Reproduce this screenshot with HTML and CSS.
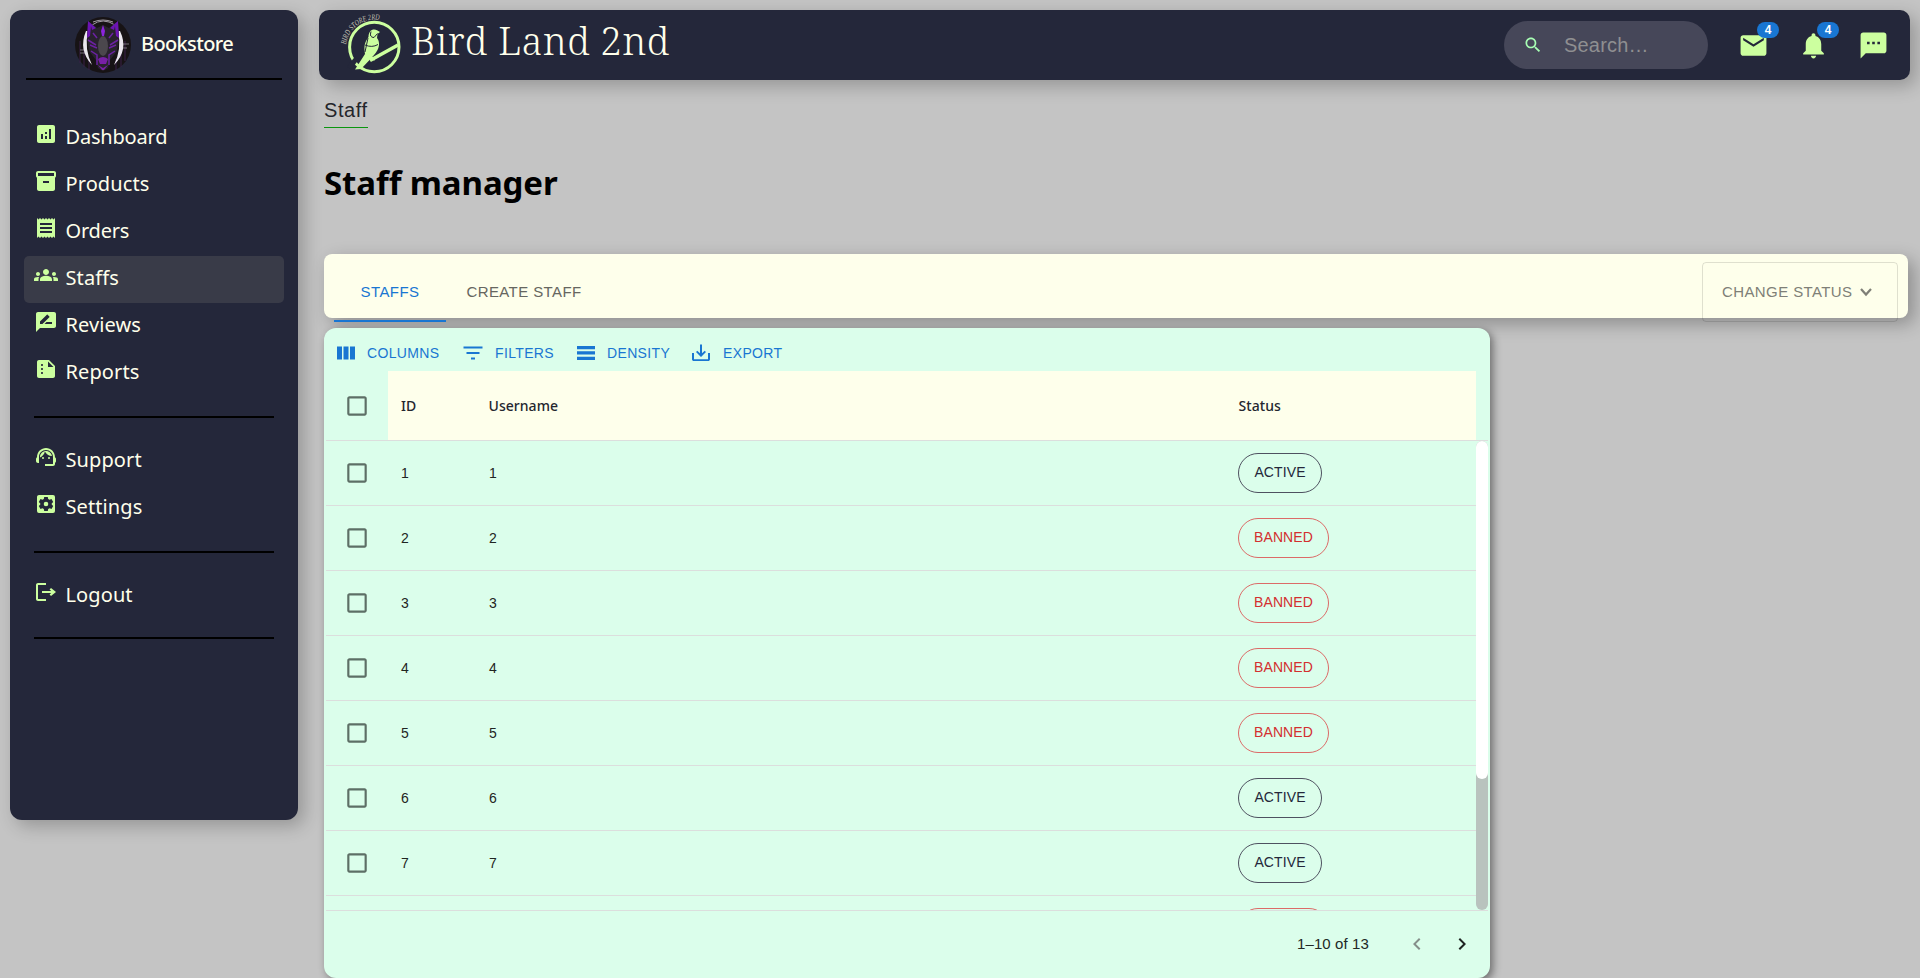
FILE: index.html
```html
<!DOCTYPE html>
<html lang="en">
<head>
<meta charset="utf-8">
<title>Staff manager</title>
<link rel="stylesheet" href="styles.css">
</head>
<body>
<svg class="defs" width="0" height="0">
  <symbol id="box" viewBox="0 0 24 24"><path d="M19 5v14H5V5h14m0-2H5c-1.100 0-2 .9-2 2v14c0 1.100.9 2 2 2h14c1.100 0 2-.9 2-2V5c0-1.100-.9-2-2-2z"/></symbol>
</svg>
<div class="layout">
  <aside class="sidebar">
    <div class="brand">
      <svg class="avatar" viewBox="0 0 56 56">
        <circle cx="28" cy="28" r="28" fill="#171315"/>
        <path d="M5 24v22M9 30v20M50 24v20M46 30v20M14 42v11M41 42v11" stroke="#3a2049" stroke-width="1"/>
        <path d="M5 33h6M5 36h5M46 27h8M46 31h6" stroke="#77707a" stroke-width="1"/>
        <path d="M17 8Q28 0 40 8M18 5Q28 1 38 5" fill="none" stroke="#a19ba3" stroke-width="1"/>
        <path d="M11 14Q3 33 17 48Q9 32 13 14zM45 14Q54 33 39 48Q47 32 43 14z" fill="#eae6ee"/>
        <path d="M12 21L13 4l9 7 6-3 6 3 9-7 1 17-2 13-7 9-2 8-5 3-5-3-2-8-7-9z" fill="#28222d"/>
        <path d="M12 21L13 4l8 7-4 2-1-4-1 10zM44 21L43 4l-8 7 4 2 1-4 1 10z" fill="#6c14b3"/>
        <path d="M28 8l2 6-1 5h-2l-1-5z" fill="#8c24dc"/>
        <path d="M13 23l8 5M43 23l-8 5M15 28l7 3M41 28l-7 3M16 34l6 4v10M40 34l-6 4v10M18 16l4 5M38 16l-4 5" fill="none" stroke="#6b21a2" stroke-width="1.500"/>
        <ellipse cx="28" cy="29" rx="5" ry="10" fill="#4b474d"/>
        <path d="M23 42q5-4 10 0l-2 5h-6zM23 48l5 3 5-3-4 5h-2z" fill="#7820a6"/>
      </svg>
      <span class="brand-name">Bookstore</span>
    </div>
    <nav class="menu">
      <a class="item"><svg viewBox="0 0 24 24"><path d="M19 3H5c-1.100 0-2 .9-2 2v14c0 1.100.9 2 2 2h14c1.100 0 2-.9 2-2V5c0-1.100-.9-2-2-2zM9 17H7v-5h2v5zm4 0h-2v-3h2v3zm0-5h-2v-2h2v2zm4 5h-2V7h2v10z"/></svg><span class="narrow">Dashboard</span></a>
      <a class="item"><svg viewBox="0 0 24 24"><path d="M20 2H4c-1 0-2 .9-2 2v3.010c0 .72.43 1.340 1 1.690V20c0 1.100 1.100 2 2 2h14c.9 0 2-.9 2-2V8.700c.57-.35 1-.97 1-1.690V4c0-1.100-1-2-2-2zm-5 12H9v-2h6v2zm5-7H4V4h16v3z"/></svg><span>Products</span></a>
      <a class="item"><svg viewBox="0 0 24 24"><path d="M18 17H6v-2h12v2zm0-4H6v-2h12v2zm0-4H6V7h12v2zM3 22l1.500-1.500L6 22l1.500-1.500L9 22l1.500-1.500L12 22l1.500-1.500L15 22l1.500-1.500L18 22l1.500-1.500L21 22V2l-1.500 1.500L18 2l-1.500 1.500L15 2l-1.500 1.500L12 2l-1.500 1.500L9 2 7.500 3.500 6 2 4.500 3.500 3 2v20z"/></svg><span class="narrow">Orders</span></a>
      <a class="item active"><svg viewBox="0 0 24 24"><path d="M12 12.750c1.630 0 3.070.39 4.240.9 1.080.48 1.760 1.560 1.760 2.730V18H6v-1.610c0-1.180.68-2.260 1.760-2.730 1.170-.52 2.610-.91 4.240-.91zM4 13c1.100 0 2-.9 2-2s-.9-2-2-2-2 .9-2 2 .9 2 2 2zm1.130 1.100c-.37-.06-.74-.1-1.130-.1-.99 0-1.930.21-2.780.58C.48 14.900 0 15.620 0 16.430V18h4.500v-1.610c0-.83.23-1.610.63-2.290zM20 13c1.100 0 2-.9 2-2s-.9-2-2-2-2 .9-2 2 .9 2 2 2zm4 3.430c0-.81-.48-1.530-1.220-1.850-.85-.37-1.790-.58-2.780-.58-.39 0-.76.04-1.130.1.4.68.63 1.460.63 2.290V18H24v-1.570zM12 6c1.660 0 3 1.340 3 3s-1.340 3-3 3-3-1.340-3-3 1.340-3 3-3z"/></svg><span>Staffs</span></a>
      <a class="item"><svg viewBox="0 0 24 24"><path d="M20 2H4c-1.100 0-1.990.9-1.990 2L2 22l4-4h14c1.100 0 2-.9 2-2V4c0-1.100-.9-2-2-2zM6 14v-2.470l6.880-6.880c.2-.2.51-.2.71 0l1.770 1.770c.2.2.2.510 0 .71L8.470 14H6zm12 0h-7.500l2-2H18v2z"/></svg><span>Reviews</span></a>
      <a class="item"><svg viewBox="0 0 24 24"><path d="M15 3H5c-1.100 0-1.990.9-1.990 2L3 19c0 1.100.89 2 1.990 2H19c1.100 0 2-.9 2-2V9l-6-6zM8 17c-.55 0-1-.45-1-1s.45-1 1-1 1 .45 1 1-.45 1-1 1zm0-4c-.55 0-1-.45-1-1s.45-1 1-1 1 .45 1 1-.45 1-1 1zm0-4c-.55 0-1-.45-1-1s.45-1 1-1 1 .45 1 1-.45 1-1 1zm6 1V4.500l5.500 5.500H14z"/></svg><span>Reports</span></a>
      <hr>
      <a class="item"><svg viewBox="0 0 24 24"><path d="M21 12.220C21 6.730 16.740 3 12 3c-4.690 0-9 3.650-9 9.280-.6.340-1 .98-1 1.720v2c0 1.100.9 2 2 2h1v-6.100c0-3.870 3.130-7 7-7s7 3.130 7 7V19h-8v2h8c1.100 0 2-.9 2-2v-1.220c.59-.31 1-.92 1-1.640v-2.300c0-.7-.41-1.310-1-1.620z"/><circle cx="9" cy="13" r="1"/><circle cx="15" cy="13" r="1"/><path d="M18 11.030C17.520 8.180 15.040 6 12.050 6c-3.030 0-6.290 2.510-6.030 6.450 2.470-1.010 4.330-3.210 4.860-5.890 1.310 2.630 4 4.440 7.120 4.470z"/></svg><span>Support</span></a>
      <a class="item"><svg viewBox="0 0 24 24"><path fill-rule="evenodd" d="M5 3h14a2 2 0 0 1 2 2v14a2 2 0 0 1-2 2H5a2 2 0 0 1-2-2V5c0-1.100.9-2 2-2zM10.200 5l-.4 2-1.300.8-2-.7-1.700 3 1.500 1.400v1l-1.500 1.400 1.700 3 2-.7 1.300.8.4 2h3.600l.4-2 1.300-.8 2 .7 1.700-3-1.500-1.400v-1l1.500-1.400-1.700-3-2 .7-1.300-.8-.4-2zM12 9.700a2.300 2.300 0 1 1 0 4.600 2.300 2.300 0 0 1 0-4.600z"/></svg><span>Settings</span></a>
      <hr>
      <a class="item logout"><svg viewBox="0 0 24 24"><path d="M17 8l-1.410 1.410L17.170 11H8v2h9.170l-1.580 1.580L17 16l5-4-5-4zM4 5h8V3H4c-1.100 0-2 .9-2 2v14c0 1.100.9 2 2 2h8v-2H4V5z"/></svg><span>Logout</span></a>
      <hr class="last">
    </nav>
  </aside>
  <div class="page">
    <header class="topbar">
      <svg class="logo" viewBox="0 0 70 70">
        <defs><path id="arc" d="M11 36.500A29 29 0 0 1 46.500 12.500"/></defs>
        <circle cx="39.300" cy="39" r="24.700" fill="none" stroke="#ccff9f" stroke-width="3"/>
        <path d="M35 52.500L63 37" stroke="#ccff9f" stroke-width="3.600"/>
        <path d="M14 60l8-10" stroke="#24273a" stroke-width="5"/>
        <path d="M20 61.500L30 46c-1-7-1-11 3.500-17 0-7 5-9 9-6.500l2.500 1.500-2.500 2-.5 4c2.500 3 2.800 8 .5 12-2 4-5 6-7 9L26 61z" fill="#ccff9f"/>
        <path d="M30 37q7 3 13-.5M36 23.500q-2 6 3 6l3.500-4M33 30l-3 14" fill="none" stroke="#24273a" stroke-width="1"/>
        <path d="M35 50l5 1" stroke="#ccff9f" stroke-width="3"/>
        <text class="arc-text"><textPath href="#arc" textLength="46" lengthAdjust="spacingAndGlyphs">BIRD STORE 2RD</textPath></text>
      </svg>
      <span class="site-name">Bird Land 2nd</span>
      <div class="search">
        <svg viewBox="0 0 24 24"><path d="M15.500 14h-.79l-.28-.27C15.410 12.590 16 11.110 16 9.500 16 5.910 13.090 3 9.500 3S3 5.910 3 9.500 5.910 16 9.500 16c1.610 0 3.090-.59 4.230-1.570l.27.28v.79l5 4.990L20.490 19l-4.990-5zm-6 0C7.010 14 5 11.990 5 9.500S7.010 5 9.500 5 14 7.010 14 9.500 11.990 14 9.500 14z"/></svg>
        <span>Search…</span>
      </div>
      <div class="actions">
        <div class="action"><svg viewBox="0 0 24 24"><path d="M20 4H4c-1.100 0-1.990.9-1.990 2L2 18c0 1.100.9 2 2 2h16c1.100 0 2-.9 2-2V6c0-1.100-.9-2-2-2zm0 4l-8 5-8-5V6l8 5 8-5v2z"/></svg><b class="badge">4</b></div>
        <div class="action"><svg viewBox="0 0 24 24"><path d="M12 22c1.100 0 2-.9 2-2h-4c0 1.100.89 2 2 2zm6-6v-5c0-3.070-1.640-5.640-4.500-6.320V4c0-.83-.67-1.500-1.500-1.500s-1.500.67-1.500 1.500v.68C7.630 5.360 6 7.920 6 11v5l-2 2v1h16v-1l-2-2z"/></svg><b class="badge">4</b></div>
        <div class="action"><svg viewBox="0 0 24 24"><path d="M20 2H4c-1.100 0-1.990.9-1.990 2L2 22l4-4h14c1.100 0 2-.9 2-2V4c0-1.100-.9-2-2-2zM9 11H7V9h2v2zm4 0h-2V9h2v2zm4 0h-2V9h2v2z"/></svg></div>
      </div>
    </header>
    <main class="content">
      <div class="crumb">Staff</div>
      <h1>Staff manager</h1>
      <div class="tabs">
        <div class="tab selected">STAFFS</div>
        <div class="tab">CREATE STAFF</div>
        <div class="change">CHANGE STATUS <svg viewBox="0 0 14 10"><path d="M2 2l5 5.500L12 2" fill="none" stroke="#7f7f77" stroke-width="2.200"/></svg></div>
      </div>
      <section class="grid">
        <div class="tools">
          <span class="tool t1"><svg viewBox="0 0 20 20"><path d="M1 3.500h5v13H1zM7.500 3.500h5v13h-5zM14 3.500h5v13h-5z"/></svg>COLUMNS</span>
          <span class="tool t2"><svg viewBox="0 0 20 20"><path d="M.5 3.500h19v2H.5zM3.500 9h13v2h-13zM8 14.500h4v2H8z"/></svg>FILTERS</span>
          <span class="tool t3"><svg viewBox="0 0 20 20"><path d="M1 3h18v3.200H1zM1 8.300h18v3.200H1zM1 13.800h18V17H1z"/></svg>DENSITY</span>
          <span class="tool t4"><svg viewBox="0 0 20 20"><path d="M17 10v6.200H3V10H1v6.200c0 1 .8 1.900 1.900 1.900h14.200c1 0 1.900-.8 1.900-1.900V10zM11 10.300l2.700-2.600 1.300 1.200-5 5-5-5 1.300-1.200L9 10.300V1.500h2z"/></svg>EXPORT</span>
        </div>
        <div class="head">
          <svg class="check"><use href="#box"/></svg>
          <div class="headcells"><span>ID</span><span>Username</span><span>Status</span></div>
        </div>
        <div class="body">
          <div class="rows">
            <div class="row"><svg class="check"><use href="#box"/></svg><span>1</span><span>1</span><i class="pill">ACTIVE</i></div>
            <div class="row"><svg class="check"><use href="#box"/></svg><span>2</span><span>2</span><i class="pill banned">BANNED</i></div>
            <div class="row"><svg class="check"><use href="#box"/></svg><span>3</span><span>3</span><i class="pill banned">BANNED</i></div>
            <div class="row"><svg class="check"><use href="#box"/></svg><span>4</span><span>4</span><i class="pill banned">BANNED</i></div>
            <div class="row"><svg class="check"><use href="#box"/></svg><span>5</span><span>5</span><i class="pill banned">BANNED</i></div>
            <div class="row"><svg class="check"><use href="#box"/></svg><span>6</span><span>6</span><i class="pill">ACTIVE</i></div>
            <div class="row"><svg class="check"><use href="#box"/></svg><span>7</span><span>7</span><i class="pill">ACTIVE</i></div>
            <div class="row"><svg class="check"></svg><span></span><span></span><i class="pill banned"></i></div>
          </div>
          <div class="track"><div class="thumb"></div></div>
        </div>
        <footer class="foot">
          <span>1–10 of 13</span>
          <svg class="prev" viewBox="0 0 24 24"><path d="M15.410 7.410L14 6l-6 6 6 6 1.410-1.410L10.830 12z"/></svg>
          <svg class="next" viewBox="0 0 24 24"><path d="M10 6L8.590 7.410 13.170 12l-4.580 4.590L10 18l6-6z"/></svg>
        </footer>
      </section>
    </main>
  </div>
</div>
</body>
</html>
```
FILE: styles.css
```css
* { box-sizing: border-box; }
body {
  margin: 0;
  background: #c4c4c4;
  font-family: "Liberation Sans", Arial, sans-serif;
  height: 978px;
  overflow: hidden;
}
svg { display: block; flex: none; }
.defs { position: absolute; }
.layout { display: flex; gap: 21px; padding: 10px; align-items: flex-start; }

.sidebar {
  width: 288px;
  height: 810px;
  flex: none;
  background: #24273a;
  border-radius: 12px;
  box-shadow: 6px 6px 18px rgba(0, 0, 0, .24);
  font-family: "Noto Sans", sans-serif;
  color: #ffffeb;
}
.brand {
  display: flex;
  align-items: center;
  margin: 0 16px;
  height: 70px;
  padding: 0 0 0 49px;
  border-bottom: 2px solid #000;
  gap: 10px;
}
.avatar { width: 56px; height: 56px; margin-top: 2px; }
.brand-name { font-size: 20px; font-weight: 500; letter-spacing: -.65px; margin-top: -2px; }
.menu { padding: 35px 14px 0; }
.item {
  display: flex;
  height: 47px;
  padding: 7px 10px 0;
  gap: 7.500px;
  border-radius: 5px;
  font-size: 20px;
  line-height: 27px;
  letter-spacing: .1px;
}
.item svg { width: 24px; height: 24px; fill: #ccff9f; }
.item span { padding-top: 1px; }
.item .narrow { letter-spacing: -.2px; }
.active { background: #393b48; }
.menu hr { margin: 19px 10px 20px; border: 0; height: 2px; background: #000; }
.menu .logout { padding-top: 6px; margin-top: 21px; }
.menu hr.last { margin-top: 16px; }

.page { flex: 1; }
.topbar {
  display: flex;
  align-items: center;
  height: 70px;
  background: #24273a;
  border-radius: 10px;
  box-shadow: 6px 6px 18px rgba(0, 0, 0, .24);
  padding: 0 21px 0 16px;
}
.logo { width: 70px; height: 70px; margin-top: -4px; }
.arc-text { font: italic 8px "Liberation Serif", serif; fill: #c7c4b8; }
.site-name {
  font-family: "Noto Serif", "Liberation Serif", serif;
  font-size: 38px;
  font-weight: 300;
  letter-spacing: .45px;
  margin: -10px 0 0 6px;
  color: #ffffeb;
  white-space: nowrap;
}
.search {
  display: flex;
  align-items: center;
  width: 204px;
  height: 48px;
  margin-left: auto;
  border-radius: 24px;
  background: #464759;
  padding-left: 19px;
  font-size: 20px;
  letter-spacing: .2px;
  color: #8f8f91;
}
.search svg { width: 20px; height: 20px; fill: #a7ffb4; }
.search span { margin-left: 21px; }
.actions { display: flex; gap: 29px; margin-left: 30px; }
.action { position: relative; width: 31px; height: 31px; }
.action svg { width: 31px; height: 31px; fill: #ccff9f; }
.badge {
  position: absolute;
  left: 19px;
  top: -8px;
  width: 22px;
  height: 16px;
  border-radius: 8px;
  background: #1976d2;
  color: #fff;
  font-size: 12px;
  line-height: 16px;
  text-align: center;
}

.content { padding: 15px 2px 0 5px; }
.crumb {
  width: 44px;
  height: 33px;
  border-bottom: 1px solid #0a960f;
  font-size: 20px;
  line-height: 30px;
  letter-spacing: .6px;
  color: #24262b;
}
h1 {
  margin: 31px 0 0;
  height: 48px;
  font: bold 33px/48px "Noto Sans", sans-serif;
  letter-spacing: -.1px;
  white-space: nowrap;
}
.tabs {
  display: flex;
  height: 64px;
  margin-top: 47px;
  padding: 8px 10px 0;
  border-radius: 8px;
  background: #feffeb;
  box-shadow: 6px 6px 18px rgba(0, 0, 0, .28);
  font-size: 15px;
  line-height: 60px;
  letter-spacing: .4px;
  color: #666660;
}
.tab { height: 60px; width: 112px; text-align: center; white-space: nowrap; }
.tab + .tab { width: 156px; }
.selected { color: #1976d2; border-bottom: 2px solid #1976d2; }
.change {
  display: flex;
  align-items: center;
  gap: 6px;
  width: 196px;
  height: 60px;
  margin-left: auto;
  padding-left: 19px;
  border: 1px solid rgba(0, 0, 0, .12);
  border-radius: 4px;
  color: #7f7f77;
  white-space: nowrap;
}
.change svg { width: 14px; height: 10px; }

.grid {
  display: flex;
  flex-direction: column;
  position: relative;
  width: 1166px;
  height: 650px;
  margin-top: 10px;
  padding: 0 2px;
  border-radius: 12px;
  background: #dbfeeb;
  box-shadow: 3px 3px 9px rgba(0, 0, 0, .45);
}
.tools { display: flex; height: 43px; padding: 7px 0 0 10px; font-size: 14px; letter-spacing: .35px; color: #1976d2; }
.tool { display: flex; align-items: center; height: 36px; gap: 11px; white-space: nowrap; }
.tool svg { width: 20px; height: 20px; fill: #1976d2; }
.t1 { width: 127px; }
.t2 { width: 113px; }
.t3 { width: 115px; }
.t2, .t4 { gap: 12px; }
.head { display: flex; align-items: center; height: 70px; border-bottom: 1px solid #dcdedd; }
.check { width: 26px; height: 26px; margin-left: 18px; fill: #5d6f66; }
.headcells {
  display: grid;
  grid-template-columns: 87.500px 750px 1fr;
  align-items: center;
  width: 1088px;
  height: 69px;
  margin-left: 18px;
  padding: 0 0 1px 13px;
  background: #feffeb;
  font: 500 14px "Noto Sans", sans-serif;
  letter-spacing: .05px;
  color: #24262f;
}
.body { display: flex; height: 469px; overflow: hidden; }
.rows { width: 1150px; }
.row {
  display: grid;
  grid-template-columns: 75px 88px 749px 1fr;
  align-items: center;
  height: 65px;
  border-bottom: 1px solid #dcdedd;
  font-size: 14px;
  color: #1f2522;
}
.pill {
  justify-self: start;
  width: 84px;
  height: 40px;
  border: 1px solid #4e5160;
  border-radius: 20px;
  font-style: normal;
  font-size: 14px;
  letter-spacing: .1px;
  line-height: 37px;
  text-align: center;
  color: #24273a;
}
.banned { width: 91px; border-color: #dc6a67; color: #d32f2f; }
.track { width: 12px; height: 469px; border-radius: 6px; background: #b9c3be; }
.thumb { height: 338px; border-radius: 6px; background: #fff; }
.foot { display: flex; align-items: center; flex: 1; border-top: 1px solid #dcdedd; padding: 0 0 2px 971px; font-size: 15px; letter-spacing: .1px; color: #222826; }
.foot span { width: 72px; white-space: nowrap; }
.foot svg { width: 24px; height: 24px; }
.prev { margin-left: 36px; fill: #858f8a; }
.next { margin-left: 21px; fill: #1f2422; }
```
